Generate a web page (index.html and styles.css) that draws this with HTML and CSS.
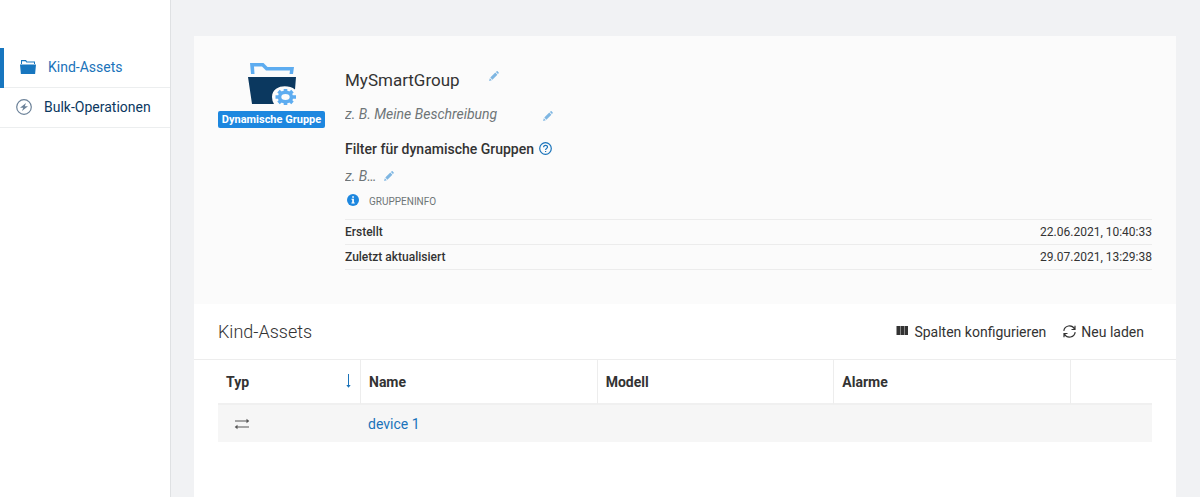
FILE: index.html
```html
<!DOCTYPE html>
<html lang="de">
<head>
<meta charset="utf-8">
<meta name="viewport" content="width=device-width, initial-scale=1">
<title>MySmartGroup</title>
<link rel="stylesheet" href="styles.css">
</head>
<body>
<svg class="sprite" aria-hidden="true">
  <symbol id="pencil" viewBox="0 0 10 10"><path fill="currentColor" d="M6.900 1.100 7.700.3q.5-.4.9 0l1.100 1.100q.4.4 0 .9l-.8.800zM6.300 1.600l2.100 2.100-5 5-2.100-2.100zM.8 7.200 2.800 9.200 .1 9.900z"/></symbol>
</svg>
<div class="app">
  <nav class="sidebar">
    <a class="tab tab-active" href="#assets">
      <svg class="tab-icon" viewBox="0 0 16 16" aria-hidden="true"><path fill="currentColor" d="M1 1h5l1 1.500h8V5h-1V3.500H6.400L5.400 2.200H2V5H1zM0 5.500h16l-.9 9.500H.9z"/></svg>
      Kind-Assets
    </a>
    <a class="tab" href="#bulk">
      <svg class="tab-icon" viewBox="0 0 16 16" aria-hidden="true"><circle cx="8" cy="8" r="7.300" fill="none" stroke="currentColor" stroke-width="1.200"/><path fill="currentColor" d="M10 4 4 8.700h3.200L6 12 12 7.300H8.800z"/></svg>
      <span>Bulk-Operationen</span>
    </a>
  </nav>
  <main class="content">
    <article class="card">
      <section class="details">
        <div class="kind">
          <svg class="kind-icon" viewBox="0 0 48 42" aria-hidden="true">
            <path fill="#5dacf0" d="M2 0h13.500l4 4H46l-1 7h-3.500l.5-3.500H18l-4-4H6l.5 7.500H3z"/>
            <path fill="#0b385f" d="M0 14h48l-1 12.500C40 21 24.500 22 24 34q0 4 2 7H4z"/>
            <ellipse cx="37.500" cy="34" rx="6" ry="4.800" fill="none" stroke="#5dacf0" stroke-width="3.600"/>
            <path stroke="#5dacf0" stroke-width="3.600" d="M37.500 26v3M37.500 39v3M31 34h-3.500M44 34h4M30.500 28.200l2.200 2M42.300 37.800l2.200 2M44.500 28.200l-2.200 2M32.700 37.800l-2.200 2"/>
          </svg>
          <span class="badge">Dynamische Gruppe</span>
        </div>
        <div class="info">
          <div class="field name-field">
            <input id="group-name" class="group-name" value="MySmartGroup" aria-label="Name">
            <label class="edit" for="group-name"><svg viewBox="0 0 10 10" role="img" aria-label="Name bearbeiten"><use href="#pencil"/></svg></label>
          </div>
          <div class="field description-field">
            <input id="description" class="description" placeholder="z. B. Meine Beschreibung" aria-label="Beschreibung">
            <label class="edit" for="description"><svg viewBox="0 0 10 10" role="img" aria-label="Beschreibung bearbeiten"><use href="#pencil"/></svg></label>
          </div>
          <div class="filter-title">
            <label for="filter">Filter für dynamische Gruppen</label>
            <button class="help" type="button" aria-label="Hilfe"><svg viewBox="0 0 13 13" aria-hidden="true"><g fill="none" stroke="currentColor" stroke-width="1.200"><circle cx="6.500" cy="6.500" r="5.800"/><path d="M4.600 5.200c0-2.600 3.900-2.400 3.900-.2 0 1.400-1.900 1.400-1.900 3.100M6.600 8.900v1.200"/></g></svg></button>
          </div>
          <div class="field filter-field">
            <input id="filter" class="filter" placeholder="z. B…">
            <label class="edit" for="filter"><svg viewBox="0 0 10 10" role="img" aria-label="Filter bearbeiten"><use href="#pencil"/></svg></label>
          </div>
          <div class="legend">
            <svg viewBox="0 0 12 12" aria-hidden="true"><circle cx="6" cy="6" r="6" fill="#1d87df"/><path fill="#fff" d="M5.200 2.300h1.700v1.500H5.200zM4.500 4.700h2.400v3.700h.8v1H4.400v-1h.8V5.700h-.7z"/></svg>
            <span>GRUPPENINFO</span>
          </div>
          <dl class="facts">
            <div class="fact"><dt>Erstellt</dt><dd>22.06.2021, 10:40:33</dd></div>
            <div class="fact"><dt>Zuletzt aktualisiert</dt><dd>29.07.2021, 13:29:38</dd></div>
          </dl>
        </div>
      </section>
      <header class="toolbar">
        <h2>Kind-Assets</h2>
        <div class="actions">
          <button class="action" type="button"><svg class="columns-icon" viewBox="0 0 13 13" aria-hidden="true"><path fill="currentColor" d="M.5 1h3.700v9H.5zM4.600 1h3.500v9H4.600zM8.500 1H12v9H8.500z"/></svg>Spalten konfigurieren</button>
          <button class="action" type="button"><svg class="reload-icon" viewBox="0 0 13 13" aria-hidden="true"><g fill="none" stroke="currentColor" stroke-width="1.200"><path d="M.8 5.800a5.700 5.700 0 0 1 10.600-2M12.200 7.200a5.700 5.700 0 0 1-10.600 2M12 .8v3.700H8.500M1 12.200V8.500h3.500"/></g></svg>Neu laden</button>
        </div>
      </header>
      <div class="table-wrap">
        <table class="assets">
          <thead>
            <tr>
              <th class="col-type" scope="col"><span class="sortable">Typ<button class="sort" type="button" aria-label="Nach Typ sortieren"><svg viewBox="0 0 6 14" aria-hidden="true"><path fill="none" stroke="currentColor" d="M2.500 0v13"/><path fill="currentColor" d="M.3 11h4.400L2.500 13.700z"/></svg></button></span></th>
              <th scope="col">Name</th>
              <th scope="col">Modell</th>
              <th scope="col">Alarme</th>
              <th class="col-actions" aria-label="Aktionen"></th>
            </tr>
          </thead>
          <tbody>
            <tr>
              <td class="cell-type"><svg viewBox="0 0 16 12" role="img" aria-label="Gerät"><path fill="none" stroke="currentColor" stroke-width="1.200" d="M1 3h13M2 9h13"/><path fill="currentColor" d="M12.500.8 15.300 3l-2.800 2.200zM3.500 6.800.7 9l2.800 2.200z"/></svg></td>
              <td class="cell-name"><a href="#device-1">device 1</a></td>
              <td></td>
              <td></td>
              <td></td>
            </tr>
          </tbody>
        </table>
      </div>
    </article>
  </main>
</div>
</body>
</html>
```
FILE: styles.css
```css
* { box-sizing: border-box; }
body {
  margin: 0;
  background: #f1f2f4;
  color: #333;
  font: 14px/20px Roboto, "Liberation Sans", sans-serif;
}
svg { display: block; }
a { color: #1a73ba; text-decoration: none; }
button, input { font: inherit; color: inherit; background: none; border: 0; padding: 0; margin: 0; }
button { cursor: pointer; }
.sprite { display: none; }

.app { display: flex; min-height: 100vh; }
.sidebar {
  flex: 0 0 171px;
  padding-top: 48px;
  background: #fff;
  border-right: 1px solid #dfe1e3;
}
.tab {
  display: flex;
  align-items: center;
  gap: 12px;
  height: 40px;
  padding: 0 0 1px 16px;
  border-bottom: 1px solid #eceeef;
  color: #0b385f;
}
.tab-active {
  border-image: linear-gradient(to right, #1776bf 4px, #eceeef 4px) 0 0 1 4;
  border-left: 4px solid #1776bf;
  color: #1a73ba;
}
.tab-icon { width: 16px; height: 16px; color: #6c8299; }
.tab-active .tab-icon { color: #1776bf; }

.content { flex: 1; display: flex; min-width: 0; padding: 36px 24px 0 23px; }
.card { flex: 1; min-width: 0; background: #fff; }

.details {
  display: flex;
  gap: 20px;
  padding: 27px 24px 34px;
  background: #fbfbfb;
}
.kind { display: flex; flex-direction: column; align-items: center; flex: 0 0 107px; }
.kind-icon { width: 48px; height: 42px; }
.badge {
  width: 100%;
  margin-top: 6px;
  border-radius: 2px;
  background: #1d87df;
  color: #fff;
  font-size: 11px;
  font-weight: 700;
  line-height: 17px;
  text-align: center;
  white-space: nowrap;
}
.info { flex: 1; min-width: 0; }
.field { display: flex; align-items: center; }
.field input { min-width: 0; }
.edit { color: #7eb6e2; cursor: pointer; }
.edit svg { width: 10px; height: 10px; }
.name-field { height: 34px; }
.group-name { width: 144px; font-size: 17px; }
.name-field .edit { padding-bottom: 8px; }
.description-field { height: 34px; }
.description { width: 198px; }
.description-field .edit { padding-top: 4px; }
.field ::placeholder { color: #6e7577; opacity: 1; font-style: italic; }
.filter-title { display: flex; align-items: center; gap: 5px; height: 36px; font-weight: 500; }
.help { color: #1a73ba; padding-bottom: 2px; }
.help svg { width: 13px; height: 13px; }
.filter-field { height: 18px; }
.filter { width: 39px; }
.legend {
  display: flex;
  align-items: center;
  gap: 10px;
  height: 34px;
  padding-left: 2px;
  color: #6e7577;
  font-size: 10px;
}
.legend svg { width: 12px; height: 12px; margin-bottom: 5px; }
.facts { margin: 0; border-top: 1px solid #ececec; font-size: 12px; }
.fact {
  display: flex;
  justify-content: space-between;
  padding: 2px 0;
  border-bottom: 1px solid #ececec;
}
.fact dt { font-weight: 500; }
.fact dd { margin: 0; }

.toolbar {
  display: flex;
  align-items: center;
  justify-content: space-between;
  height: 56px;
  padding: 0 32px 0 24px;
  border-bottom: 1px solid #ededed;
}
.toolbar h2 { margin: 0; font-size: 18px; font-weight: 300; }
.actions { display: flex; gap: 17px; }
.action { display: flex; align-items: center; gap: 5px; }
.columns-icon { width: 13px; height: 13px; }
.reload-icon { width: 13px; height: 13px; }

.table-wrap { padding: 0 24px; }
.assets { width: 100%; table-layout: fixed; border-collapse: separate; border-spacing: 0; }
.assets th {
  height: 45px;
  padding: 0 8px;
  border-right: 1px solid #ededed;
  border-bottom: 2px solid #f0f0f0;
  font-weight: 700;
  text-align: left;
}
.assets .col-type { width: 143px; }
.assets .col-actions { width: 81px; border-right: 0; }
.sortable { display: flex; justify-content: space-between; align-items: center; }
.sort { color: #1a73ba; padding-bottom: 2px; }
.sort svg { width: 6px; height: 14px; }
.assets td { height: 37px; padding: 0 7px; background: #f6f6f6; }
.assets .cell-type { padding-left: 16px; color: #555; }
.cell-type svg { width: 16px; height: 12px; }
```
